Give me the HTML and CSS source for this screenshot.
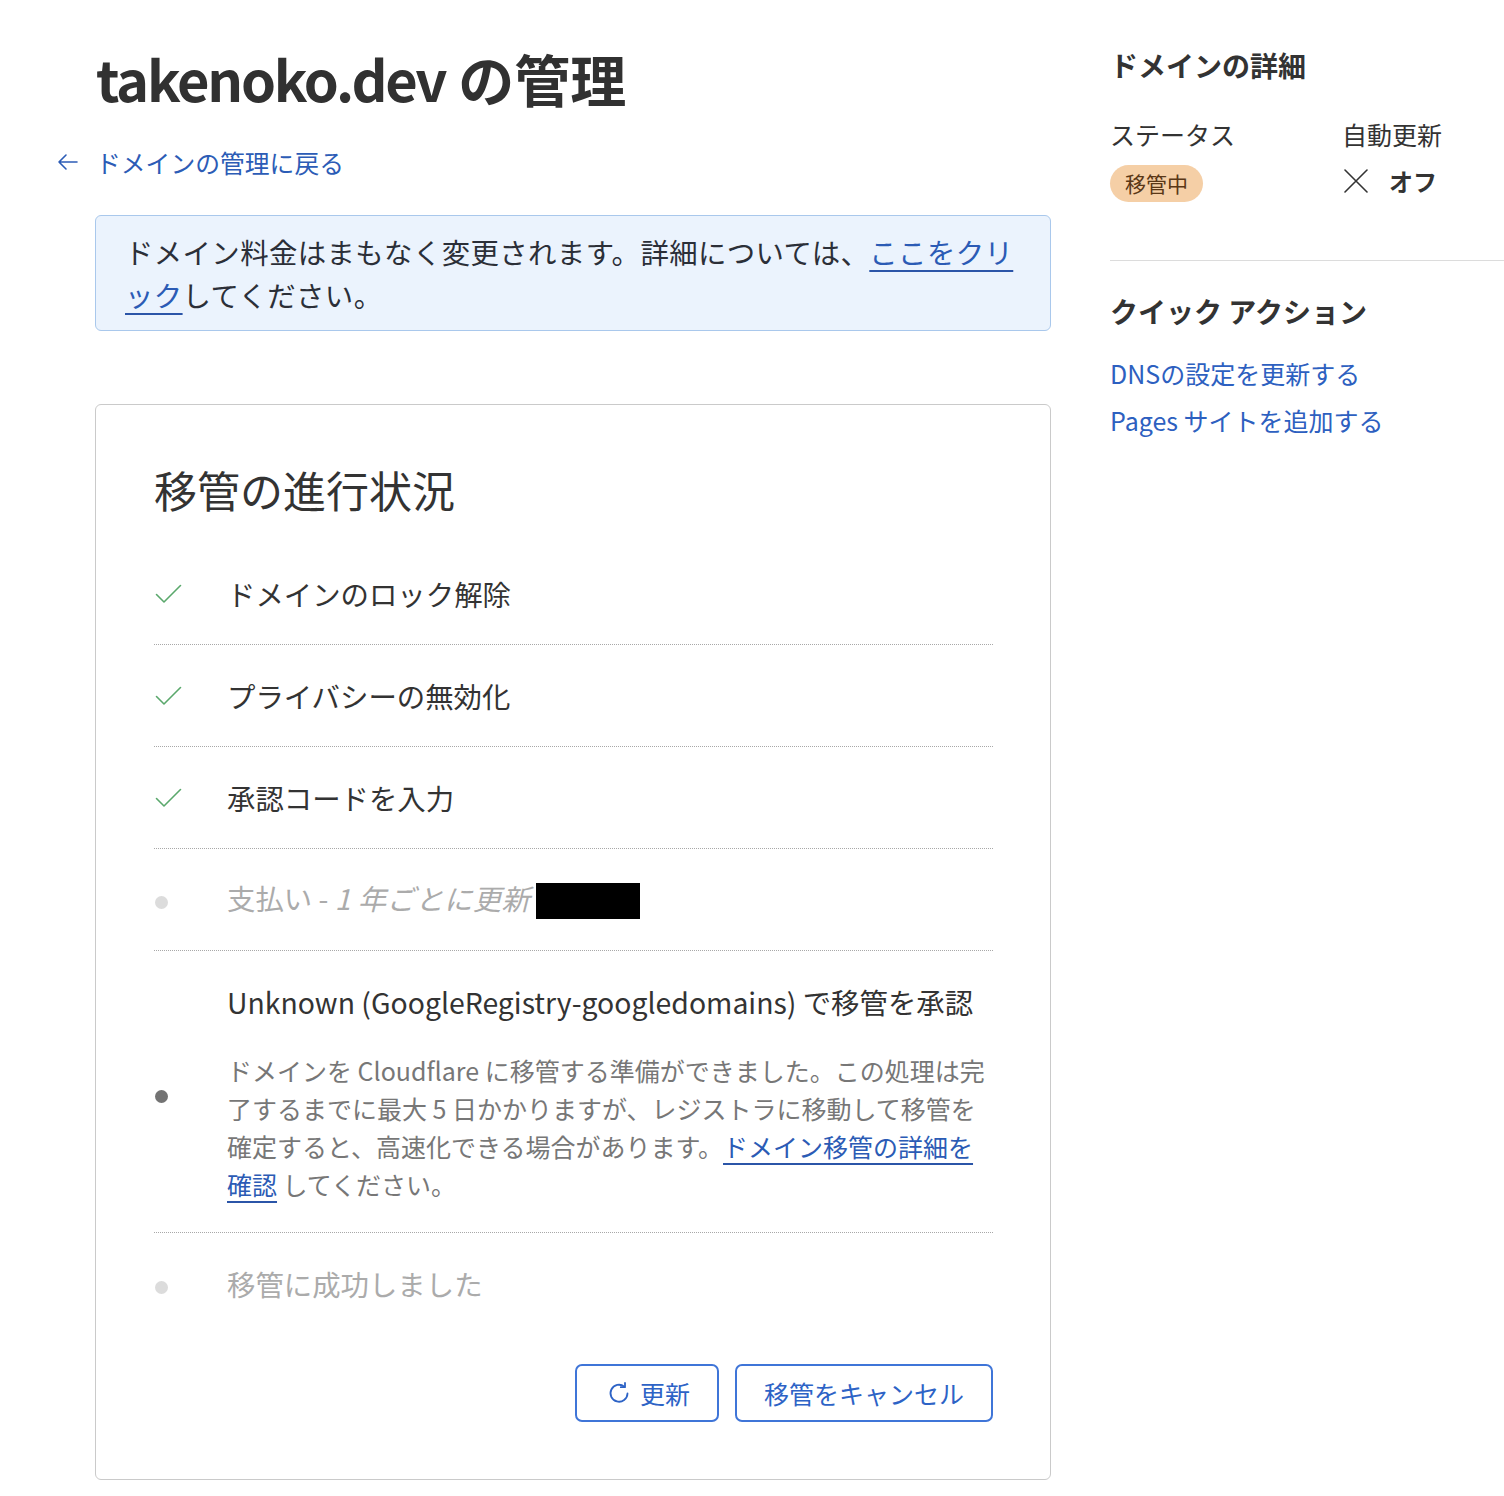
FILE: index.html
```html
<!DOCTYPE html>
<html lang="ja">
<head>
<meta charset="utf-8">
<title>takenoko.dev の管理</title>
<link rel="stylesheet" href="styles.css">
</head>
<body>
<div class="page">
  <main class="main">
    <h1 class="title"><span class="title-latin">takenoko.dev</span> の管理</h1>
    <a class="back" href="#">
      <svg class="back-icon" width="22" height="18" viewBox="0 0 22 18" fill="none" stroke="currentColor" stroke-width="1.6" stroke-linecap="round" stroke-linejoin="round"><path d="M20 9H2M9 2L2 9l7 7"/></svg>
      <span>ドメインの管理に戻る</span>
    </a>
    <div class="banner">ドメイン料金はまもなく変更されます。詳細については、<a class="ulink" href="#">ここをクリック</a>してください。</div>

    <section class="card">
      <h2 class="card-title">移管の進行状況</h2>
      <ul class="steps">
        <li class="step">
          <span class="step-icon"><svg width="27" height="20" viewBox="0 0 27 20" fill="none" stroke="#5aa86c" stroke-width="1.6" stroke-linecap="round" stroke-linejoin="round"><path d="M1.5 10.5l7.5 7.5L25.5 1.5"/></svg></span>
          <span class="step-text">ドメインのロック解除</span>
        </li>
        <li class="step">
          <span class="step-icon"><svg width="27" height="20" viewBox="0 0 27 20" fill="none" stroke="#5aa86c" stroke-width="1.6" stroke-linecap="round" stroke-linejoin="round"><path d="M1.5 10.5l7.5 7.5L25.5 1.5"/></svg></span>
          <span class="step-text">プライバシーの無効化</span>
        </li>
        <li class="step">
          <span class="step-icon"><svg width="27" height="20" viewBox="0 0 27 20" fill="none" stroke="#5aa86c" stroke-width="1.6" stroke-linecap="round" stroke-linejoin="round"><path d="M1.5 10.5l7.5 7.5L25.5 1.5"/></svg></span>
          <span class="step-text">承認コードを入力</span>
        </li>
        <li class="step pending">
          <span class="step-icon"><span class="dot dot-light"></span></span>
          <span class="step-text">支払い - <em>1 年ごとに更新</em><span class="redact"></span></span>
        </li>
        <li class="step step-tall">
          <span class="step-icon"><span class="dot dot-dark"></span></span>
          <div class="step-body">
            <div class="step-text">Unknown (GoogleRegistry-googledomains) で移管を承認</div>
            <p class="step-desc">ドメインを Cloudflare に移管する準備ができました。この処理は完了するまでに最大 5 日かかりますが、レジストラに移動して移管を確定すると、高速化できる場合があります。<a class="ulink" href="#">ドメイン移管の詳細を確認</a> してください。</p>
          </div>
        </li>
        <li class="step pending last">
          <span class="step-icon"><span class="dot dot-light"></span></span>
          <span class="step-text">移管に成功しました</span>
        </li>
      </ul>
      <div class="actions">
        <button class="btn" type="button">
          <svg width="24" height="24" viewBox="0 0 24 24" fill="none" stroke="currentColor" stroke-width="1.8" stroke-linecap="round" stroke-linejoin="round"><path d="M17.3 5.6A8.5 8.5 0 1 0 20.5 12.5"/><path d="M18 2v4.2h-4.2"/></svg>
          <span>更新</span>
        </button>
        <button class="btn" type="button"><span>移管をキャンセル</span></button>
      </div>
    </section>
  </main>

  <aside class="side">
    <section class="side-details">
      <h3 class="side-title">ドメインの詳細</h3>
      <div class="details-grid">
        <div class="detail-label">ステータス</div>
        <div class="detail-label">自動更新</div>
        <div class="detail-value"><span class="badge">移管中</span></div>
        <div class="detail-value renew">
          <svg width="24" height="24" viewBox="0 0 24 24" fill="none" stroke="#333" stroke-width="1.6" stroke-linecap="round"><path d="M1 1l22 22M23 1L1 23"/></svg>
          <strong>オフ</strong>
        </div>
      </div>
    </section>
    <section class="side-actions">
      <h3 class="side-title">クイック アクション</h3>
      <ul class="quick-links">
        <li><a href="#">DNSの設定を更新する</a></li>
        <li><a href="#">Pages サイトを追加する</a></li>
      </ul>
    </section>
  </aside>
</div>
</body>
</html>
```

FILE: styles.css
```css
* {
  box-sizing: border-box;
  margin: 0;
  padding: 0;
}

body {
  font-family: "Noto Sans CJK JP", "Noto Sans", sans-serif;
  color: #333;
  background: #fff;
}

a {
  color: #2b5cb8;
  text-decoration: none;
}

.page {
  display: flex;
  gap: 59px;
  padding-left: 95px;
}

.main {
  width: 956px;
  flex: none;
  padding-bottom: 15px;
}

.title {
  margin-top: 45px;
  font-size: 56px;
  line-height: 66px;
  font-weight: 700;
  color: #313131;
  padding-left: 1px;
}

.title-latin {
  letter-spacing: -2.2px;
}

.back {
  display: flex;
  align-items: center;
  gap: 17px;
  margin-top: 35px;
  margin-left: -38px;
  font-size: 24.8px;
  line-height: 32px;
  color: #2c5cb6;
}

.back-icon {
  flex: none;
}

.banner {
  margin-top: 37px;
  background: #ebf3fd;
  border: 1px solid #a9c8ec;
  border-radius: 6px;
  padding: 14px 30px 14px 29px;
  font-size: 28.4px;
  line-height: 43px;
  letter-spacing: 0.4px;
  color: #2b2f38;
}

.ulink {
  color: #2b5bb5;
  text-decoration: underline;
  text-decoration-thickness: 2px;
  text-underline-offset: 6px;
  text-decoration-color: #2b55a8;
}

.card {
  margin-top: 73px;
  border: 1px solid #cacaca;
  border-radius: 6px;
  padding: 58px 57px 57px 58px;
}

.card-title {
  font-size: 43px;
  line-height: 52px;
  font-weight: 400;
  color: #333;
}

.steps {
  list-style: none;
  margin-top: 28px;
}

.step {
  display: grid;
  grid-template-columns: 73px 1fr;
  align-items: center;
  height: 102px;
  border-bottom: 1px dotted #a8a8a8;
}

.step.last {
  border-bottom: none;
}

.step-icon {
  display: flex;
  align-items: center;
  padding-left: 1px;
}

.step-text {
  font-size: 28.4px;
  line-height: 38px;
  color: #333;
}

.step.pending .step-text {
  color: #ababab;
}

.step.pending em {
  font-style: italic;
  letter-spacing: 0.4px;
}

.redact {
  display: inline-block;
  width: 104px;
  height: 36px;
  background: #000;
  vertical-align: middle;
  margin-left: 6px;
  position: relative;
  top: -1px;
}

.dot {
  display: block;
  width: 13px;
  height: 13px;
  border-radius: 50%;
  position: relative;
  top: 3px;
}

.dot-light {
  background: #dcdcdc;
}

.dot-dark {
  background: #737373;
}

.step-tall {
  height: auto;
  padding: 32px 0 29px;
}

.step-desc {
  margin-top: 30px;
  font-size: 25px;
  line-height: 38px;
  color: #777;
}

.actions {
  display: flex;
  justify-content: flex-end;
  gap: 16px;
  margin-top: 29px;
}

.btn {
  display: flex;
  align-items: center;
  gap: 9px;
  height: 58px;
  padding: 0 27px 0 30px;
  background: #fff;
  border: 2px solid #3f75d8;
  border-radius: 7px;
  font-family: inherit;
  font-size: 25px;
  color: #2d63c6;
  cursor: pointer;
}

.btn:last-child {
  padding: 0 27px;
}

.side {
  width: 394px;
  flex: none;
  padding-top: 47px;
}

.side-title {
  font-size: 28px;
  line-height: 36px;
  font-weight: 700;
  color: #333;
}

.side-details {
  border-bottom: 1px solid #dcdcdc;
  padding-bottom: 58px;
}

.details-grid {
  display: grid;
  grid-template-columns: 232px 1fr;
  row-gap: 14px;
  margin-top: 34px;
}

.detail-label {
  font-size: 25px;
  line-height: 34px;
  color: #333;
}

.detail-value {
  display: flex;
  align-items: center;
  height: 37px;
}

.badge {
  display: inline-block;
  height: 37px;
  line-height: 37px;
  padding: 0 15px;
  border-radius: 19px;
  background: #f5cfa6;
  color: #5a3716;
  font-size: 21px;
}

.renew {
  gap: 21px;
  padding-left: 2px;
  position: relative;
  top: -3px;
}

.renew strong {
  font-size: 24px;
  font-weight: 700;
  color: #333;
  line-height: 32px;
}

.side-actions {
  padding-top: 32px;
}

.quick-links {
  list-style: none;
  margin-top: 21px;
}

.quick-links li {
  font-size: 25px;
  line-height: 47px;
}

.quick-links a {
  color: #2d60c0;
}
```
